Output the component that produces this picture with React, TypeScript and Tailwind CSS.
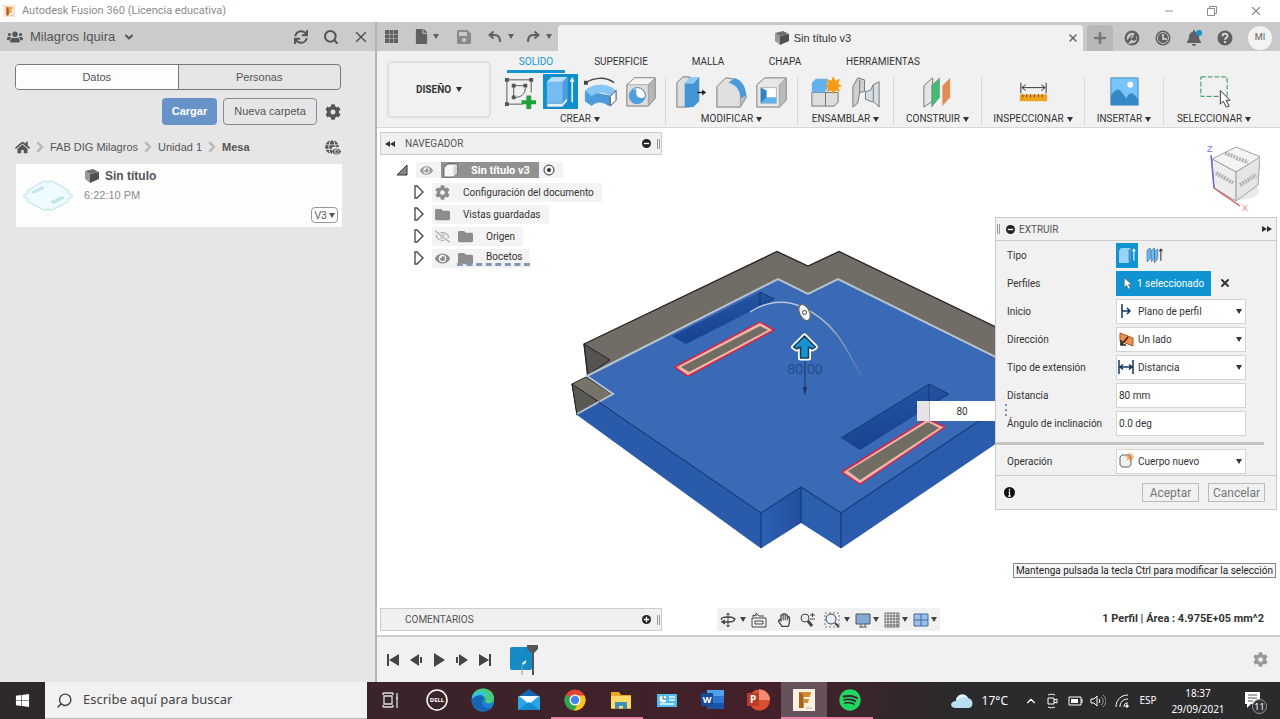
import type { ReactNode } from 'react';
import { FaUsers, FaHome, FaCog, FaFolder, FaEye, FaRegEyeSlash, FaRegHandPaper, FaSync, FaWindows, FaSpotify, FaBell, FaSave, FaFile, FaGlobe } from 'react-icons/fa';
import { LuX, LuChevronDown, LuChevronUp, LuChevronRight, LuSearch, LuMinus, LuPlus } from 'react-icons/lu';

function Caret({ className = '' }: { className?: string }) {
  return (
    <svg viewBox="0 0 6 5" className={`h-[5px] w-[6px] shrink-0 fill-current ${className}`}>
      <path d="M0 0h6L3 5z" />
    </svg>
  );
}

function CubeIcon({ className = 'size-4' }: { className?: string }) {
  return (
    <svg viewBox="0 0 16 16" className={className}>
      <path d="M1 3l5 3v9l-5-4z" fill="#999" />
      <path d="M6 6l9-2v7l-9 4z" fill="#505050" />
      <path d="M1 3l8-2 6 3-9 2z" fill="#6e6e6e" />
    </svg>
  );
}

function FusionIcon({ className }: { className: string }) {
  return (
    <svg viewBox="0 0 24 24" className={className}>
      <path d="M0 0h24v24H0z" fill="#fbe3cd" />
      <path d="M7 4h12l-1 5h-6v2h5l-1 4h-4v5H7z" fill="#dd8a2e" />
      <path d="M7 4l4 2v15H7z" fill="#a75d1e" />
      <path d="M11 6h7" stroke="#f6bd75" strokeWidth="2" />
      <path d="M14 21h6" stroke="#b9ab9d" />
    </svg>
  );
}

/* ---------- left data panel ---------- */

function DataPanel() {
  return (
    <aside className="flex w-[377px] shrink-0 flex-col border-r-2 border-[#b4b4b4] bg-[#e6e6e6] text-[#555]">
      <header className="flex h-[29px] items-center bg-[#cbcbcb] pr-[5px] pl-[7px]">
        <FaUsers className="size-4" />
        <button className="ml-[7px] flex items-center gap-2 text-[13px]">
          Milagros Iquira
          <LuChevronDown className="size-3" strokeWidth={4} />
        </button>
        <button aria-label="Actualizar" className="ml-auto">
          <FaSync className="size-[14px]" />
        </button>
        <button aria-label="Buscar" className="ml-[15px]">
          <LuSearch className="size-4" strokeWidth={3} />
        </button>
        <button aria-label="Cerrar panel" className="ml-[13px]">
          <LuX className="size-[18px]" strokeWidth={2} />
        </button>
      </header>

      <div className="flex flex-col px-[15px] pt-[13px] text-[11px]">
        <div className="mr-[19px] flex h-[26px] overflow-hidden rounded-sm border border-[#777]">
          <button className="flex-1 border-r border-[#777] bg-[#fdfdfd]">Datos</button>
          <button className="flex-1">Personas</button>
        </div>

        <div className="mt-2 mr-[19px] flex h-[27px] items-center justify-end">
          <button className="h-[27px] w-[55px] rounded-sm bg-[#6893c8] font-bold text-white">Cargar</button>
          <button className="ml-[6px] h-[27px] w-[94px] rounded-sm border border-[#8a8a8a]">Nueva carpeta</button>
          <button aria-label="Ajustes" className="ml-2">
            <FaCog className="size-4" />
          </button>
        </div>

        <nav className="mt-3 mr-[19px] flex h-5 items-center">
          <a href="#inicio" aria-label="Inicio">
            <FaHome className="size-[15px]" />
          </a>
          <LuChevronRight className="mx-[2px] size-4 text-[#bcbcbc]" strokeWidth={4} />
          <a href="#proyecto">FAB DIG Milagros</a>
          <LuChevronRight className="mx-[2px] size-4 text-[#bcbcbc]" strokeWidth={4} />
          <a href="#unidad">Unidad 1</a>
          <LuChevronRight className="mx-[2px] size-4 text-[#bcbcbc]" strokeWidth={4} />
          <a href="#mesa" className="font-bold">Mesa</a>
          <span className="relative mr-[2px] ml-auto">
            <FaGlobe className="size-[14px]" />
            <FaEye className="absolute -right-[2px] -bottom-[2px] size-[9px] bg-[#e6e6e6]" />
          </span>
        </nav>

        <article className="mt-[7px] mr-[18px] ml-px flex h-[63px] bg-[#fdfdfd]">
          <svg viewBox="0 0 64 64" className="size-16 text-[#b5dde8]">
            <path d="M28 17l4 1 4-1 16 9 0 3 5 3-5 3 0 3-16 8-4-1-4 1-16-8 0-3-5-3 5-3 0-3z" fill="#eefbff" stroke="currentColor" />
            <path d="M16 28l10-5 2 1-10 5zM35 38l10-5 3 1-10 5z" fill="#ccecf3" stroke="currentColor" />
          </svg>
          <div className="flex-1 pt-[3px] pl-1">
            <h3 className="flex items-center gap-[5px] text-[12px] leading-[18px] font-bold">
              <CubeIcon />
              Sin título
            </h3>
            <p className="text-[11px] leading-5 text-[#8b8b8b]">6:22:10 PM</p>
          </div>
          <button className="mr-1 mb-1 flex h-4 w-[27px] items-center justify-center gap-[2px] self-end rounded-sm border border-[#999] text-[10px]">
            V3
            <Caret />
          </button>
        </article>
      </div>
    </aside>
  );
}

/* ---------- top bars ---------- */

function TitleBar() {
  return (
    <header className="flex h-[22px] items-center bg-white pl-[3px] text-[#8c8c8c]">
      <FusionIcon className="size-3" />
      <h1 className="ml-[7px] font-['Roboto',sans-serif] text-[11px]">Autodesk Fusion 360 (Licencia educativa)</h1>
      <div className="mr-[17px] ml-auto flex items-center gap-8">
        <button aria-label="Minimizar">
          <LuMinus className="size-3" strokeWidth={2} />
        </button>
        <button aria-label="Restaurar">
          <svg viewBox="0 0 10 10" className="size-[10px] fill-none stroke-current">
            <path d="M.5 2.5h7v7h-7zM2.5 2.5v-2h7v7h-2" />
          </svg>
        </button>
        <button aria-label="Cerrar">
          <LuX className="size-[14px]" strokeWidth={2} />
        </button>
      </div>
    </header>
  );
}

function DocumentBar() {
  return (
    <div className="flex h-[29px] items-end bg-[#c9c9c9] text-[#606060]">
      <div className="flex h-full w-[181px] items-center pl-2">
        <svg viewBox="0 0 13 13" className="size-[13px] fill-current">
          <path d="M0 0h4v4H0zM4.5 0h4v4h-4zM9 0h4v4H9zM0 4.500h4v4H0zM4.500 4.500h4v4h-4zM9 4.500h4v4H9zM0 9h4v4H0zM4.500 9h4v4h-4zM9 9h4v4H9z" />
        </svg>
        <FaFile className="ml-4 size-[15px]" />
        <Caret className="ml-1" />
        <FaSave className="ml-[17px] size-4 text-[#8a8a8a]" />
        <svg viewBox="0 0 14 12" className="ml-4 h-3 w-[14px] fill-none stroke-current stroke-2">
          <path d="M5.500.5L1.500 4l4 3.500M2 4h5c3 0 5 2 5 7" />
        </svg>
        <Caret className="ml-[6px]" />
        <svg viewBox="0 0 14 12" className="ml-3 h-3 w-[14px] fill-none stroke-current stroke-2">
          <path d="M8.500.5l4 3.500-4 3.500M12 4H7C4 4 2 6 2 11" />
        </svg>
        <Caret className="ml-[6px]" />
      </div>
      <div className="flex h-[26px] flex-1 items-center rounded-t bg-[#f1f1f1] pr-1 text-[11px] text-[#333]">
        <div className="flex flex-1 items-center justify-center gap-1">
          <CubeIcon />
          Sin título v3
        </div>
        <button aria-label="Cerrar documento">
          <LuX className="size-3 text-[#666]" strokeWidth={3} />
        </button>
      </div>
      <div className="flex h-[26px] items-center">
        <button aria-label="Documento nuevo" className="ml-1 grid h-full w-[26px] place-items-center rounded-t bg-[#b7b7b7]">
          <LuPlus className="size-4 text-[#777]" strokeWidth={4} />
        </button>
        <svg viewBox="0 0 16 16" className="ml-[11px] size-4">
          <circle cx="8" cy="8" r="6.300" fill="none" stroke="currentColor" strokeWidth="2.200" />
          <path d="M3 11l4-6 2 1 2-3 3 2-2 2 1 2-3 2-2-1-3 3z" fill="currentColor" />
          <path d="M7 8l2-2M5 14l3-4" stroke="#c9c9c9" strokeWidth="1.500" />
        </svg>
        <svg viewBox="0 0 16 16" className="ml-[15px] size-4">
          <circle cx="8" cy="8" r="7.500" fill="currentColor" />
          <circle cx="8" cy="8" r="5.500" fill="none" stroke="#ddd" strokeWidth=".8" />
          <path d="M8 4v5h4" fill="none" stroke="#ddd" strokeWidth="1.500" />
        </svg>
        <span className="relative ml-[15px]">
          <FaBell className="size-4" />
          <i className="absolute top-0 right-0 size-[6px] rounded-full bg-[#1b8fd0]" />
        </span>
        <svg viewBox="0 0 16 16" className="ml-[15px] size-4">
          <circle cx="8" cy="8" r="7.500" fill="currentColor" />
          <path d="M5.500 6.200c0-3.400 5-3.200 5-.3C10.500 7.800 8 7.600 8 9.800M8 11v2" fill="none" stroke="#ddd" strokeWidth="1.800" />
        </svg>
        <span className="mr-2 ml-[15px] grid size-6 place-items-center rounded-full bg-[#f3f3f3] font-['Roboto',sans-serif] text-[9px]">MI</span>
      </div>
    </div>
  );
}

function Group({ label, className, children }: { label: string; className: string; children: ReactNode }) {
  return (
    <section className={`flex shrink-0 flex-col items-center ${className}`}>
      <div className="flex h-9 items-center gap-[5px]">{children}</div>
      <button className="mt-1 flex items-center gap-[3px] text-[10px] leading-3 whitespace-nowrap">
        {label}
        <Caret />
      </button>
    </section>
  );
}

function Separator() {
  return <div className="mt-1 h-12 w-px shrink-0 bg-[#d9d9d9]" />;
}

const toolIcon = 'size-[35px] shrink-0';

function Ribbon() {
  return (
    <div className="flex h-[77px] border-b border-[#d8d8d8] bg-[#f1f1f1] pl-[10px] font-['Roboto',sans-serif] text-[#333]">
      <button className="mt-[10px] flex h-[57px] w-[104px] shrink-0 items-center justify-center gap-[5px] rounded border-2 border-[#e0e0e0] text-[10px] font-bold">
        DISEÑO
        <Caret />
      </button>

      <div className="flex min-w-0 flex-1 flex-col">
        <nav className="flex h-[22px] items-end text-[10px] leading-4">
          <a href="#solido" className="ml-4 h-[19px] w-[58px] border-b-[3px] border-[#1295d4] text-center text-[#1295d4]">SOLIDO</a>
          <a href="#superficie" className="h-[19px] w-[112px] text-center">SUPERFICIE</a>
          <a href="#malla" className="h-[19px] w-[62px] text-center">MALLA</a>
          <a href="#chapa" className="h-[19px] w-[92px] text-center">CHAPA</a>
          <a href="#herramientas" className="h-[19px] w-[104px] text-center">HERRAMIENTAS</a>
        </nav>

        <div className="flex">
          <Group label="CREAR" className="w-[174px] pl-[4px]">
            <svg viewBox="0 0 36 36" className={toolIcon}>
              <path d="M4 6h25v13M4 6v25h16" fill="none" stroke="#555" />
              <path d="M11 12v12M11 12h11M23 14c0 6-4 10-10 10" fill="none" stroke="#555" />
              <path d="M2 4h4v4H2zM27 4h4v4h-4zM2 29h4v4H2zM9 10h4v4H9zM21 10h4v4h-4zM9 22h4v4H9z" fill="#555" />
              <path d="M24 22h5v5h5v4h-5v5h-5v-5h-5v-4h5z" fill="#23a13d" />
            </svg>
            <svg viewBox="0 0 36 36" className={toolIcon}>
              <path d="M0 0h36v36H0z" fill="#0f8fcc" />
              <path d="M4 8l5-5h16v21l-5 6H4z" fill="#75bcf2" />
              <path d="M4 8l5-5h16l-5 5z" fill="#b4defb" />
              <path d="M20 8l5-5v21l-5 6z" fill="#4f9ddd" />
              <path d="M4 30v4h16l5-6v-4l-5 6z" fill="#dff1fd" stroke="#3c87bb" strokeWidth=".7" />
              <path d="M30 6v23" stroke="#fff" strokeWidth="1.500" />
              <path d="M27.500 8L30 3l2.500 5z" fill="#fff" />
            </svg>
            <svg viewBox="0 0 36 36" className={toolIcon}>
              <path d="M3 9C10 4 23 2 32 9" fill="none" stroke="#444" strokeWidth="1.500" />
              <path d="M1 7h4v4H1z" fill="#444" />
              <path d="M2 17v11l7 5c4-5 12-5 17 0l2-1V22z" fill="#4c9bdc" />
              <path d="M2 17c8-8 24-8 32 0l-6 6c-5-5-14-5-19 0z" fill="#85c6f6" />
              <path d="M28 23l6-6v10l-6 6z" fill="#fff" stroke="#444" />
            </svg>
            <svg viewBox="0 0 36 36" className={toolIcon}>
              <path d="M4 11l8-7h21v21l-7 8H4z" fill="#ddd" stroke="#777" />
              <path d="M4 11l8-7h21l-7 7z" fill="#f4f4f4" stroke="#888" strokeWidth=".6" />
              <path d="M26 11l7-7v21l-7 8z" fill="#b6b6b6" stroke="#888" strokeWidth=".6" />
              <circle cx="15" cy="22" r="8" fill="#fff" stroke="#2b75ae" />
              <path d="M10 16a8 8 0 1 0 12 8c-6 2-10-1-8-8z" fill="#4e9fdd" />
            </svg>
          </Group>
          <Separator />
          <Group label="MODIFICAR" className="w-[131px]">
            <svg viewBox="0 0 36 36" className={toolIcon}>
              <path d="M3 9l6-6h7v31H3z" fill="#ddd" stroke="#777" />
              <path d="M11 10l6-7h9v25l-6 6h-9z" fill="#4394d5" />
              <path d="M11 10l6-7h9l-6 7z" fill="#8fcbf5" />
              <path d="M24 19h7" fill="none" stroke="#222" strokeWidth="1.500" />
              <path d="M29 16l4 3-4 3z" fill="#222" />
            </svg>
            <svg viewBox="0 0 36 36" className={toolIcon}>
              <path d="M3 13l9-9c12 0 20 8 21 20l-6 10H3z" fill="#e0e0e0" stroke="#777" />
              <path d="M21 4c8 2 12 10 12 18l-6 3c0-8-4-14-12-16z" fill="#4b9bd9" />
              <path d="M27 25v9l6-9v-3z" fill="#bbb" stroke="#888" strokeWidth=".6" />
            </svg>
            <svg viewBox="0 0 36 36" className={toolIcon}>
              <path d="M3 11l8-7h22v23l-7 7H3z" fill="#e7e7e7" stroke="#777" />
              <path d="M26 11l7-7v23l-7 7z" fill="#bbb" stroke="#888" strokeWidth=".6" />
              <path d="M7 14h16v16H7z" fill="#fff" stroke="#888" strokeWidth=".6" />
              <path d="M7 14l6 3v8l-6 5z" fill="#2f84c7" />
              <path d="M13 24h10v6H7z" fill="#63b1ed" />
            </svg>
          </Group>
          <Separator />
          <Group label="ENSAMBLAR" className="w-[95px]">
            <svg viewBox="0 0 36 36" className={toolIcon}>
              <path d="M4 19h14v14H4zM18 19h13v10l-4 4h-9z" fill="#ddd" stroke="#777" />
              <path d="M4 9l4-4h12v10l-3 4H4z" fill="#63b1ed" />
              <path d="M26 2l2 5 5-2-2 5 4 2-4 2 2 4-5-1-2 4-2-4-5 1 2-4-4-2 4-2-2-5 5 2z" fill="#f69b16" />
            </svg>
            <svg viewBox="0 0 36 36" className={toolIcon}>
              <path d="M5 13l5-9 7 2v12l-5 1-2 11-5 4z" fill="#cfcfcf" stroke="#777" />
              <path d="M32 8l-6 3-3 6-5 1v8l5 2 4 1 5 5z" fill="#d5dde5" stroke="#777" />
              <path d="M12 6v13M26 11v17" fill="none" stroke="#777" />
            </svg>
          </Group>
          <Separator />
          <Group label="CONSTRUIR" className="w-[87px]">
            <svg viewBox="0 0 36 36" className={toolIcon}>
              <path d="M4 12l9-8v24l-9 6z" fill="#e5e5e5" stroke="#777" />
              <path d="M12 12l8-8v20l-8 10z" fill="#41bd70" stroke="#777" strokeWidth=".6" />
              <path d="M23 12l8-8v20l-8 9z" fill="#e08c53" />
            </svg>
          </Group>
          <Separator />
          <Group label="INSPECCIONAR" className="w-[102px]">
            <svg viewBox="0 0 36 36" className={toolIcon}>
              <path d="M5 9v11M31 9v11M6 14h24M10 11l-4 3 4 3M26 11l4 3-4 3" fill="none" stroke="#333" />
              <path d="M4 21h28v7H4z" fill="#efa21b" />
              <path d="M7 21v3M11 21v3M15 21v3M19 21v3M23 21v3M27 21v3" stroke="#63471a" />
            </svg>
          </Group>
          <Separator />
          <Group label="INSERTAR" className="w-[78px]">
            <svg viewBox="0 0 36 36" className={toolIcon}>
              <path d="M4 4h28v28H4z" fill="#78c4fa" stroke="#4791c2" />
              <path d="M4 22c4-6 8-9 12-2l4 5c3-6 6-8 12 1v6H4z" fill="#3388c5" />
              <circle cx="24" cy="11" r="3" fill="#fff" />
            </svg>
          </Group>
          <Separator />
          <Group label="SELECCIONAR" className="w-[100px]">
            <svg viewBox="0 0 36 36" className={toolIcon}>
              <path d="M4 3h27v20H4z" fill="none" stroke="#23934a" strokeDasharray="5 2" />
              <path d="M24 17v14l3-3 3 6 3-1-3-6h4z" fill="#fff" stroke="#333" />
            </svg>
          </Group>
        </div>
      </div>
    </div>
  );
}

/* ---------- viewport ---------- */

function Model() {
  return (
    <svg viewBox="560 240 440 320" className="h-[320px] w-[440px]">
      <defs>
        <linearGradient id="pocket" x1="0" y1="0" x2=".4" y2="1">
          <stop offset="0" stopColor="#2b5cad" />
          <stop offset="1" stopColor="#153f8c" />
        </linearGradient>
        <linearGradient id="wall" x1="0" y1="0" x2="1" y2="0">
          <stop offset="0" stopColor="#2a60b3" />
          <stop offset="1" stopColor="#244f9e" />
        </linearGradient>
        <linearGradient id="arc" x1="0" y1="0" x2="1" y2="1">
          <stop offset="0" stopColor="#c3ccda" />
          <stop offset=".5" stopColor="#a9b4c6" />
          <stop offset="1" stopColor="#4a74b5" />
        </linearGradient>
      </defs>
      {/* ghost of the original body */}
      <path d="M584 344L777 251.500l31 14.500 31-14.500L1000 329v70H620l-32-20z" fill="#716d66" stroke="#222" strokeWidth="1.300" />
      <path d="M584 344l26 16-22 15z" fill="#55534f" stroke="#222" />
      <path d="M572 384l14-7 27 18-36 20z" fill="#77736b" stroke="#222" />
      <path d="M572 384l27 18-22 13z" fill="#5a5954" stroke="#222" />
      {/* front walls */}
      <path d="M577 415l22-14 162 112v35.500z" fill="#2a5bab" />
      <path d="M761 513l40-26v36l-40 25.500z" fill="url(#wall)" />
      <path d="M801 487l40 26v35.500L801 523z" fill="#2b5ead" />
      <path d="M841 513L1000 407v34L841 548.500z" fill="#2a5bad" />
      {/* top face */}
      <path d="M587 376L778 279l30 15 30-15 162 80v48L841 513l-40-26-40 26L599 401l14-7z" fill="#3a6ab5" />
      <path d="M577 414l36-20-26-18L778 279l30 15 30-15 162 80" fill="none" stroke="#b7c3cf" strokeWidth="2" />
      <path d="M599 402l162 111 40-26 40 26 159-106M761 513v35M801 487v36M841 513v35" fill="none" stroke="#173a78" strokeWidth="1.200" />
      {/* slots */}
      <path d="M672 336l88-44 14 7-9 5-79 40z" fill="url(#pocket)" />
      <path d="M760 292v13M760 292l14 7-10 6" fill="none" stroke="#16376f" />
      <path d="M841 438l88-54 20 10-89 56z" fill="url(#pocket)" />
      <path d="M841 438l88-54 20 10-20 12M929 384v17" fill="none" stroke="#16376f" />
      <path d="M675 367l85-45 14 8-86 46z" fill="#eeb6ac" stroke="#d12745" strokeWidth="1.500" />
      <path d="M681 367l79-41 8 4-79 42z" fill="#716d63" />
      <path d="M842 472l85-53 18 8-85 57z" fill="#eeb6ac" stroke="#d12745" strokeWidth="1.500" />
      <path d="M848 471l80-49 11 6-79 52z" fill="#716d63" />
      {/* manipulator */}
      <path d="M750 312c15-10 35-14 54-4 27 13 39 32 57 68" fill="none" stroke="url(#arc)" strokeWidth="1.500" />
      <text x="805" y="374" textAnchor="middle" fontSize="14" fill="#254a8a">80.00</text>
      <path d="M805 361v28" stroke="#1b335f" />
      <path d="M803 387h4l-2 9z" fill="#1b335f" />
      <path d="M804.500 336l11 11-3 2-4-2v11h-8v-11l-4 2-3-2z" fill="#fff" stroke="#fff" strokeWidth="5" strokeLinejoin="round" />
      <path d="M804.500 336l11 11-3 2-4-2v11h-8v-11l-4 2-3-2z" fill="#1793cf" stroke="#153c57" strokeWidth="1.500" strokeLinejoin="round" />
      <ellipse cx="804.500" cy="312.500" rx="5" ry="8.500" transform="rotate(-25 804.500 312.500)" fill="#f4f4f4" stroke="#666" strokeWidth="1.200" />
      <circle cx="804.500" cy="312.500" r="2" fill="#fff" stroke="#444" />
    </svg>
  );
}

function PanelBar({ title, open }: { title: string; open: boolean }) {
  return (
    <header className="flex h-[23px] w-[282px] items-center border border-[#ccc] bg-[#f0f0f0] pr-px pl-1 font-['Roboto',sans-serif] text-[10px] text-[#555]">
      <span className="w-5">
        {open && (
          <svg viewBox="0 0 10 6" className="h-[6px] w-[10px] fill-[#333]">
            <path d="M5 0v6L0 3zM10 0v6L5 3z" />
          </svg>
        )}
      </span>
      <h2>{title}</h2>
      <button aria-label={open ? 'Contraer' : 'Expandir'} className="ml-auto">
        <svg viewBox="0 0 10 10" className="size-[9px]">
          <circle cx="5" cy="5" r="5" fill="#222" />
          <path d={open ? 'M2 5h6' : 'M2 5h6M5 2v6'} stroke="#fff" strokeWidth="1.500" />
        </svg>
      </button>
      <span className="ml-[6px] h-[10px] w-[3px] border-x border-[#999]" />
    </header>
  );
}

function TreeArrow() {
  return (
    <svg viewBox="0 0 10 14" className="h-[14px] w-[10px] shrink-0 fill-white stroke-[#444]">
      <path d="M1 1v12h2l6-6-6-6z" strokeWidth="1.300" />
    </svg>
  );
}

function TreeRow({ label, children, dashed = false }: { label: string; children: ReactNode; dashed?: boolean }) {
  return (
    <li className="flex h-[22px] items-center pl-[34px]">
      <TreeArrow />
      <div className={`ml-2 flex h-[19px] items-center bg-[#f3f3f3] pl-[3px] text-[#8d8d8d] ${dashed ? '' : 'pr-2'}`}>
        {children}
        {dashed ? (
          <span className="-ml-4 h-4 border-b-[3px] border-dashed border-[#8298b6] pr-[7px] pl-[29px] text-[#333]">{label}</span>
        ) : (
          <span className="ml-[13px] text-[#333]">{label}</span>
        )}
      </div>
    </li>
  );
}

function Browser() {
  return (
    <section className="w-[282px]">
      <PanelBar title="NAVEGADOR" open />
      <ul className="mt-1 font-['Roboto',sans-serif] text-[10px] leading-[13px]">
        <li className="flex h-[22px] items-center pl-4">
          <svg viewBox="0 0 12 12" className="size-3">
            <path d="M11 1v10H1z" fill="#888" stroke="#333" />
          </svg>
          <div className="ml-2 flex h-4 items-center bg-[#f3f3f3] pr-2 pl-1">
            <FaEye className="size-[13px] text-[#999]" />
            <div className="ml-2 flex h-4 w-[98px] items-center bg-[#919191] text-[11px] font-bold text-white">
              <svg viewBox="0 0 16 16" className="ml-[2px] size-[15px]">
                <path d="M1 5l4-4h10v10l-4 4H1z" fill="#f7f7f7" stroke="#555" />
                <path d="M11 5l4-4v10l-4 4z" fill="#d5d5d5" />
              </svg>
              <span className="ml-[13px]">Sin título v3</span>
            </div>
            <svg viewBox="0 0 12 12" className="ml-1 size-3">
              <circle cx="6" cy="6" r="5" fill="none" stroke="#333" />
              <circle cx="6" cy="6" r="2" fill="#333" />
            </svg>
          </div>
        </li>
        <TreeRow label="Configuración del documento">
          <FaCog className="size-[15px]" />
        </TreeRow>
        <TreeRow label="Vistas guardadas">
          <FaFolder className="size-[15px]" />
        </TreeRow>
        <TreeRow label="Origen">
          <FaRegEyeSlash className="mr-2 size-[15px] text-[#aaa]" />
          <FaFolder className="size-[15px]" />
        </TreeRow>
        <TreeRow label="Bocetos" dashed>
          <FaEye className="mr-2 size-[15px]" />
          <FaFolder className="size-[15px]" />
        </TreeRow>
      </ul>
    </section>
  );
}

function ViewCube() {
  return (
    <svg viewBox="0 0 58 74" className="h-[74px] w-[58px]">
      <ellipse cx="37" cy="52" rx="20" ry="9" fill="#eaeaea" />
      <path d="M10 20L34 8l25 10-25 15z" fill="#f4f4f4" stroke="#a0a0a0" />
      <path d="M10 20l24 13v29L12 49z" fill="#ededed" stroke="#a0a0a0" />
      <path d="M34 33l24-15-2 28-22 16z" fill="#e5e5e5" stroke="#a0a0a0" />
      <path d="M23 14l10 4M34 19l12 4M14 34l17 10M38 46l16-10" stroke="#b0b0b0" strokeWidth="4" strokeDasharray="2 1" />
      <path d="M9 16l3 33" stroke="#6767df" strokeWidth="1.500" />
      <path d="M12 49l26 18" stroke="#d95959" strokeWidth="1.500" />
      <text x="5" y="13" fontSize="9" fill="#7878df">Z</text>
      <text x="40" y="72" fontSize="9" fill="#ee8888">X</text>
    </svg>
  );
}

function Field({ id, label, children }: { id: string; label: string; children: ReactNode }) {
  return (
    <div className="flex h-7 items-center">
      <label htmlFor={id} className="w-[109px] shrink-0">{label}</label>
      {children}
    </div>
  );
}

function IconSelect({ id, value, children }: { id: string; value: string; children: ReactNode }) {
  return (
    <div className="relative w-[130px]">
      <svg viewBox="0 0 16 16" className="pointer-events-none absolute top-1 left-[2px] size-4">{children}</svg>
      <select id={id} className="h-[25px] w-full appearance-none border border-[#d4d4d4] bg-white pl-[21px]">
        <option>{value}</option>
      </select>
      <Caret className="pointer-events-none absolute top-[10px] right-1" />
    </div>
  );
}

function ExtrudeDialog() {
  return (
    <form className="w-[282px] border border-[#ccc] bg-[#f1f1f1] font-['Roboto',sans-serif] text-[10px] text-[#333]">
      <header className="flex h-[23px] items-center border-b border-[#ccc] pr-1">
        <span className="ml-[1px] h-[10px] w-[3px] border-x border-[#999]" />
        <svg viewBox="0 0 10 10" className="ml-[6px] size-[9px]">
          <circle cx="5" cy="5" r="5" fill="#222" />
          <path d="M2 5h6" stroke="#fff" strokeWidth="1.500" />
        </svg>
        <h2 className="ml-1 text-[#555]">EXTRUIR</h2>
        <svg viewBox="0 0 10 6" className="ml-auto h-[6px] w-[10px] fill-[#333]">
          <path d="M0 0v6l5-3zM5 0v6l5-3z" />
        </svg>
      </header>

      <div className="pl-[11px]">
        <Field id="tipo" label="Tipo">
          <button id="tipo" type="button" aria-label="Extruir" className="grid h-[25px] w-[22px] place-items-center bg-[#0f93d2]">
            <svg viewBox="0 0 16 16" className="size-[17px]">
              <path d="M0 3l2-2h9v11l-2 3H0z" fill="#9bd3f8" />
              <path d="M9 3l2-2v11l-2 3z" fill="#438fca" />
              <path d="M14 2v11M12.500 4L14 2l1.500 2" fill="none" stroke="#fff" />
            </svg>
          </button>
          <button type="button" aria-label="Extrusión fina" className="ml-2">
            <svg viewBox="0 0 16 16" className="size-[17px]">
              <path d="M1 3l3-2v10l-3 3zM5 3l3-2v10l-3 3zM8 4l3-2v9l-3 4z" fill="#73b9ec" stroke="#3979a9" strokeWidth=".7" />
              <path d="M14 2v11M12.500 4L14 2l1.500 2" fill="none" stroke="#333" />
            </svg>
          </button>
        </Field>
        <Field id="perfiles" label="Perfiles">
          <button id="perfiles" type="button" className="flex h-[25px] w-[95px] items-center justify-center gap-1 bg-[#0f93d2] text-white">
            <svg viewBox="0 0 10 14" className="h-[13px] w-[10px]">
              <path d="M1 1v10l2.500-2 2 4 2-1-2-4H9z" fill="#fff" stroke="#555" strokeWidth=".6" />
            </svg>
            1 seleccionado
          </button>
          <button type="button" aria-label="Borrar selección" className="ml-2">
            <LuX className="size-3" strokeWidth={4} />
          </button>
        </Field>
        <Field id="inicio" label="Inicio">
          <IconSelect id="inicio" value="Plano de perfil">
            <path d="M4 1v14M4 8h8M9 5l3 3-3 3" fill="none" stroke="#17365f" strokeWidth="1.500" />
          </IconSelect>
        </Field>
        <Field id="direccion" label="Dirección">
          <IconSelect id="direccion" value="Un lado">
            <path d="M2 2l13 5v8L2 10z" fill="#f0904c" stroke="#a55927" />
            <path d="M10 6l-7 8M3 9v5h5" fill="none" stroke="#222" strokeWidth="1.500" />
          </IconSelect>
        </Field>
        <Field id="extension" label="Tipo de extensión">
          <IconSelect id="extension" value="Distancia">
            <path d="M1 1v14M15 1v14M2 8h12M5 5.500L2 8l3 2.500M11 5.500L14 8l-3 2.500" fill="none" stroke="#17365f" strokeWidth="1.500" />
          </IconSelect>
        </Field>
        <Field id="distancia" label="Distancia">
          <input id="distancia" defaultValue="80 mm" className="h-[25px] w-[130px] border border-[#d4d4d4] bg-white px-[2px]" />
        </Field>
        <Field id="angulo" label="Ángulo de inclinación">
          <input id="angulo" defaultValue="0.0 deg" className="h-[25px] w-[130px] border border-[#d4d4d4] bg-white px-[2px]" />
        </Field>
      </div>

      <hr className="mt-[5px] mr-3 border-t-[3px] border-[#c3c3c3]" />

      <div className="pt-[2px] pl-[11px]">
        <Field id="operacion" label="Operación">
          <IconSelect id="operacion" value="Cuerpo nuevo">
            <path d="M2 4l2-2h7l2 2v8l-2 2H4l-2-2z" fill="#f0f0f0" stroke="#5d6266" />
            <path d="M12 0v8M8 4h8M9 1l6 6M15 1L9 7" stroke="#e68127" />
          </IconSelect>
        </Field>
      </div>

      <footer className="flex h-[34px] items-center border-t border-[#ccc] pr-[11px] pl-2">
        <svg viewBox="0 0 12 12" className="size-[11px]">
          <circle cx="6" cy="6" r="6" fill="#111" />
          <path d="M6 2v2M5 5.500h1V10M4.500 10h3" fill="none" stroke="#fff" strokeWidth="1.300" />
        </svg>
        <button type="button" className="ml-auto h-[19px] w-[57px] border border-[#bbb] text-[12px] leading-4 text-[#777]">Aceptar</button>
        <button type="button" className="ml-[9px] h-[19px] w-[57px] border border-[#bbb] text-[12px] leading-4 text-[#777]">Cancelar</button>
      </footer>
    </form>
  );
}

function ViewTools() {
  return (
    <div className="flex h-[23px] w-[223px] items-center bg-[#f1f1f1] pl-[3px] text-[#444]">
      <svg viewBox="0 0 16 16" className="size-4 fill-none stroke-current">
        <path d="M8 1v14M6.500 3L8 1l1.500 2M6.500 13L8 15l1.500-2" />
        <path d="M13 6c3 2 1 4-4 4H3M5 8l-3 2 3 2M2 8c-2-2 1-3 6-3s7 1 7 3" strokeWidth="1.300" />
      </svg>
      <Caret className="ml-1" />
      <svg viewBox="0 0 16 16" className="ml-[5px] size-4 fill-none stroke-current">
        <path d="M1 6h14v9H1zM4 9h8v3H4zM2 5V3l3 1V1l3 3h5" />
      </svg>
      <FaRegHandPaper className="ml-[10px] size-[14px]" />
      <svg viewBox="0 0 16 16" className="ml-2 size-4 fill-none stroke-current">
        <circle cx="6" cy="6" r="4" fill="#e8f1f8" />
        <path d="M9 9l4 5" strokeWidth="3" />
        <path d="M11 3h5M13.500 1v4M11 7h5" />
      </svg>
      <svg viewBox="0 0 16 16" className="ml-[9px] size-4 fill-none stroke-current">
        <path d="M1 1h14v14H1z" strokeDasharray="2 2" strokeWidth=".7" />
        <circle cx="7" cy="7" r="5" fill="#e8f1f8" />
        <path d="M11 11l4 4" strokeWidth="2" />
      </svg>
      <Caret className="ml-1" />
      <svg viewBox="0 0 16 16" className="ml-[5px] size-4">
        <path d="M1 2h14v10H1zM6 12v3M10 12v3M4 15h8" fill="#86a9d8" stroke="#555" />
      </svg>
      <Caret className="ml-[2px]" />
      <svg viewBox="0 0 16 16" className="ml-[5px] size-4 fill-none stroke-current">
        <path d="M1 1h14v14H1zM4 1v14M7 1v14M10 1v14M13 1v14M1 4h14M1 7h14M1 10h14M1 13h14" strokeWidth=".7" />
      </svg>
      <Caret className="ml-[2px]" />
      <svg viewBox="0 0 16 16" className="ml-[5px] size-4">
        <path d="M1 2h14v12H1zM8 2v12M1 8h14" fill="#9ebee8" stroke="#416aa5" />
      </svg>
      <Caret className="ml-[2px]" />
    </div>
  );
}

function Viewport() {
  return (
    <main className="relative flex min-h-[507px] flex-1 flex-col bg-white pt-1 pl-[3px]">
      <Browser />
      <div className="absolute top-28 left-[183px]">
        <Model />
      </div>
      <div className="absolute top-[273px] left-[540px] flex h-5 w-[79px] bg-white">
        <span className="w-[13px] border-r border-[#bbb] bg-[#e4e4e4]" />
        <input aria-label="Distancia en pantalla" defaultValue="80" className="w-16 text-center font-['Roboto',sans-serif] text-[10px] text-[#333]" />
      </div>
      <div className="absolute top-[11px] right-[20px]">
        <ViewCube />
      </div>
      <div className="absolute top-[89px] right-[3px]">
        <ExtrudeDialog />
        <svg viewBox="0 0 3 12" className="absolute top-[187px] left-[10px] h-3 w-[3px] bg-[#f1f1f1] fill-[#7b8faf]">
          <path d="M0 0h2v2H0zM0 5h2v2H0zM0 10h2v2H0z" />
        </svg>
      </div>
      <p role="tooltip" className="absolute right-1 bottom-[57px] border border-[#888] bg-[#f6f6f6] px-[2px] font-['Roboto',sans-serif] text-[10px] leading-[13px] text-[#222]">
        Mantenga pulsada la tecla Ctrl para modificar la selección
      </p>

      <div className="mt-auto mb-1 flex items-center">
        <PanelBar title="COMENTARIOS" open={false} />
        <div className="ml-[55px]">
          <ViewTools />
        </div>
        <p className="mr-4 ml-auto font-['Roboto',sans-serif] text-[11px] font-bold text-[#333]">1 Perfil | Área : 4.975E+05 mm^2</p>
      </div>
    </main>
  );
}

function Timeline() {
  const controls = [
    { label: 'Ir al inicio', d: 'M1 1h2v12H1zM13 1v12L3 7z' },
    { label: 'Paso atrás', d: 'M10 1v12L1 7zM11 4h2v6h-2z' },
    { label: 'Reproducir', d: 'M2 0v14l11-7z' },
    { label: 'Paso adelante', d: 'M4 1v12l9-6zM1 4h2v6H1z' },
    { label: 'Ir al final', d: 'M11 1h2v12h-2zM1 1v12l10-6z' },
  ];

  return (
    <div className="flex h-[47px] items-center border-t-2 border-[#cfcfcf] bg-[#f1f1f1] pl-[9px] text-[#444]">
      <div className="flex gap-[9px]">
        {controls.map((c) => (
          <button key={c.label} aria-label={c.label}>
            <svg viewBox="0 0 14 14" className="size-[14px] fill-current">
              <path d={c.d} />
            </svg>
          </button>
        ))}
      </div>
      <svg viewBox="0 0 30 30" className="ml-[17px] size-[30px]">
        <rect x="1" y="2" width="22" height="23" rx="2" fill="#158ac4" />
        <path d="M13 18l4-3v3l-3 2z" fill="#d5eec5" />
        <path d="M13 20v10" stroke="#999" />
        <path d="M18 0h11v4l-4 4v22h-2V8l-5-4z" fill="#555" />
      </svg>
      <FaCog className="mr-3 ml-auto size-[15px] text-[#999]" />
    </div>
  );
}

/* ---------- Windows taskbar ---------- */

function TaskItem({ label, active = false, running = false, children }: { label: string; active?: boolean; running?: boolean; children: ReactNode }) {
  return (
    <button
      aria-label={label}
      className={`grid h-full w-[46px] place-items-center border-b-2 ${running ? 'border-[#ec81aa]' : 'border-transparent'} ${active ? 'bg-[#65525a]' : ''}`}
    >
      <svg viewBox="0 0 24 24" className="size-6">{children}</svg>
    </button>
  );
}

function Taskbar() {
  return (
    <footer className="flex h-[37px] bg-linear-to-r from-[#2d2829] via-[#44202a] via-60% to-[#2b2a2c] to-75% font-['Noto_Sans',sans-serif] text-white">
      <button aria-label="Inicio" className="grid w-[45px] shrink-0 place-items-center">
        <FaWindows className="size-[15px]" />
      </button>
      <label className="flex w-[322px] shrink-0 items-center border-b border-[#bbb] bg-[#f1f1f1] pl-[11px] text-[#444]">
        <LuSearch className="size-[17px] -scale-x-100" />
        <input aria-label="Buscar en Windows" placeholder="Escribe aquí para buscar" className="ml-[10px] w-64 text-[13px] placeholder:text-[#444]" />
      </label>

      <div className="flex">
        <TaskItem label="Vista de tareas">
          <path d="M5 5h10M6 8h8v8H6zM5 19h10M5 5v2M15 5v2M5 17v2M15 17v2M19 5v15M18 10h2" fill="none" stroke="#ddd" strokeWidth="1.300" />
        </TaskItem>
        <TaskItem label="Dell">
          <circle cx="13" cy="12" r="10" fill="none" stroke="#fff" strokeWidth="1.500" />
          <text x="13" y="14" fontSize="6" fontWeight="700" fill="#fff" textAnchor="middle">DELL</text>
        </TaskItem>
        <TaskItem label="Edge">
          <circle cx="13" cy="12" r="11.500" fill="#1b7fd2" />
          <path d="M2 9C5-3 24-2 24 11c0 4-6 6-9 3 3-6-7-10-13-5z" fill="#4cca78" />
          <path d="M2 9c6-5 12-2 11 2-4 5 2 11 9 9-9 7-20 0-20-8z" fill="#1663b2" />
          <path d="M2 9c5-8 15-7 15 0-4-3-10-3-15 2z" fill="#35c6df" />
        </TaskItem>
        <TaskItem label="Correo">
          <path d="M2 9l11-8 11 8z" fill="#1267ad" />
          <path d="M2 8h22v14H2z" fill="#2aa5e9" />
          <path d="M3 8h20l-10 8z" fill="#f2faff" />
          <path d="M2 22l11-8 11 8z" fill="#168ad1" />
        </TaskItem>
        <TaskItem label="Chrome" running>
          <circle cx="13" cy="12" r="10.500" fill="#e84234" />
          <path d="M4 6.500A10.500 10.500 0 0 0 12 22.500l5-8z" fill="#2fa64e" />
          <path d="M22.500 7.500A10.500 10.500 0 0 1 12 22.500l6-10.500-5-4.500z" fill="#fbc519" />
          <circle cx="13" cy="12" r="5.500" fill="#fff" />
          <circle cx="13" cy="12" r="4.200" fill="#4486ee" />
        </TaskItem>
        <TaskItem label="Explorador" running>
          <path d="M3 4h8l2 3h10v14H3z" fill="#e9ab21" />
          <path d="M3 8h20v12H3z" fill="#ffda69" />
          <path d="M7 21v-7h12v7h-4v-3h-4v3z" fill="#3d91bd" />
        </TaskItem>
        <TaskItem label="Panel">
          <path d="M3 6h20v13H3z" fill="#51bceb" />
          <circle cx="9" cy="11" r="3.500" fill="#fff" />
          <path d="M9 7v4h4" stroke="#1c6e9d" fill="none" />
          <path d="M15 9h6M15 12h6M6 16h14" stroke="#e9f8ff" strokeWidth="1.500" />
        </TaskItem>
        <TaskItem label="Word">
          <path d="M7 2h17v19H7z" fill="#2e77ce" />
          <path d="M7 2h17v6H7z" fill="#51a1ea" />
          <path d="M7 15h17v6H7z" fill="#1c56a2" />
          <path d="M1 5h12v13H1z" fill="#174c94" />
          <text x="7" y="15" fontSize="9" fontWeight="700" fill="#fff" textAnchor="middle">W</text>
        </TaskItem>
        <TaskItem label="PowerPoint">
          <circle cx="13.500" cy="12" r="10.500" fill="#da4e32" />
          <path d="M13 1.500A10.500 10.500 0 0 1 24 12H13z" fill="#f38d72" />
          <path d="M1 5h12v13H1z" fill="#b93c26" />
          <text x="7" y="15" fontSize="10" fontWeight="700" fill="#fff" textAnchor="middle">P</text>
        </TaskItem>
        <TaskItem label="Fusion 360" active running>
          <path d="M1 1h22v22H1z" fill="#fff1df" />
          <path d="M7 4h12l-1 5h-6v2h5l-1 4h-4v5H7z" fill="#d78a30" />
          <path d="M7 4l4 2v14H7z" fill="#a46723" />
          <path d="M14 20h6" stroke="#b9ab9d" />
        </TaskItem>
        <button aria-label="Spotify" className="grid w-[46px] place-items-center border-b-2 border-[#ec81aa]">
          <FaSpotify className="size-[22px] text-[#22d662]" />
        </button>
      </div>

      <div className="ml-auto flex items-center">
        <svg viewBox="0 0 22 16" className="h-4 w-[22px]">
          <path d="M5 15C-2 15-1 8 5 8c0-8 10-9 12-3 6 1 6 10 0 10z" fill="#b8dff2" />
          <path d="M5 8c0-7 10-8 12-3-5-2-8 0-12 3z" fill="#e6f6ff" />
        </svg>
        <span className="ml-[9px] text-[12px]">17°C</span>
        <LuChevronUp className="ml-4 size-[14px]" />
        <svg viewBox="0 0 14 16" className="ml-[7px] h-4 w-[14px] fill-none stroke-white">
          <path d="M3 5h6v6H3zM9 7l3-1v4l-3-1M3 2c2-1 5-1 7 0M3 14c2 1 5 1 7 0" />
        </svg>
        <svg viewBox="0 0 16 10" className="ml-[9px] h-[10px] w-4">
          <path d="M1 1h12v8H1zM14 3v4" fill="none" stroke="#fff" />
          <path d="M3 3h7v4H3z" fill="#fff" />
        </svg>
        <svg viewBox="0 0 16 14" className="ml-[6px] h-[14px] w-4 fill-none stroke-white">
          <path d="M1 5h3l3-3v10L4 9H1zM9 5c1 1 1 3 0 4" />
          <path d="M11 3c3 2 3 6 0 8M13 1c4 4 4 8 0 12" className="opacity-50" />
        </svg>
        <svg viewBox="0 0 14 14" className="ml-[9px] size-[14px] fill-none stroke-white">
          <path d="M1 13C1 6 6 1 13 1M5 13c0-5 3-8 8-8M9 13c0-3 1-4 4-4" />
          <path d="M11 11h2v2h-2z" fill="#fff" />
        </svg>
        <span className="ml-[9px] w-5 text-center text-[10px]">ESP</span>
        <time className="ml-3 w-[56px] text-center text-[10px] leading-4">
          18:37
          <br />
          29/09/2021
        </time>
        <div className="relative mr-4 ml-[18px]">
          <svg viewBox="0 0 20 20" className="size-[20px]">
            <path d="M1 1h15v12H7l-4 4v-4H1z" fill="#fff" />
            <path d="M4 4h9M4 7h9M4 10h5" stroke="#555" />
          </svg>
          <span className="absolute top-2 left-2 grid size-[15px] place-items-center rounded-full border border-[#999] bg-[#353235] text-[9px]">11</span>
        </div>
      </div>
    </footer>
  );
}

export default function App() {
  return (
    <div className="flex min-h-screen flex-col overflow-hidden bg-white font-['Liberation_Sans',sans-serif]">
      <TitleBar />
      <div className="flex flex-1">
        <DataPanel />
        <div className="flex min-w-0 flex-1 flex-col">
          <DocumentBar />
          <Ribbon />
          <Viewport />
          <Timeline />
        </div>
      </div>
      <Taskbar />
    </div>
  );
}
